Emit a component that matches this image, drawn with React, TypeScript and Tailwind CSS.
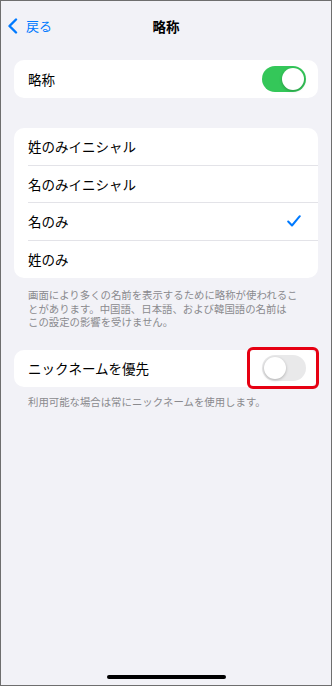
import React from 'react';

const options = ['姓のみイニシャル', '名のみイニシャル', '名のみ', '姓のみ'];
const selected = '名のみ';

function Toggle({ on }: { on: boolean }) {
  return (
    <div
      className={
        on
          ? 'flex h-[26px] w-[44px] items-center justify-end rounded-full bg-[#34c759] p-[2px]'
          : 'flex h-[26px] w-[44px] items-center justify-start rounded-full bg-[#e9e9ea] p-[2px]'
      }
    >
      <div className="h-[22px] w-[22px] rounded-full bg-white shadow-[0_1px_3px_rgba(0,0,0,0.25)]" />
    </div>
  );
}

export default function App() {
  return (
    <div className="relative flex h-[686px] w-[332px] flex-col overflow-hidden border border-[#6e6e6e] bg-[#f2f2f7] font-['Noto_Sans_CJK_JP',sans-serif] text-black">
      {/* nav bar */}
      <div className="relative flex h-[50px] items-center">
        <div className="flex items-center gap-[8px] pl-[6px] text-[13px] text-[#007aff]">
          <svg width="11" height="16" viewBox="0 0 11 16" fill="none">
            <path
              d="M9 1.5 L2.5 8 L9 14.5"
              stroke="#007aff"
              strokeWidth="2.4"
              strokeLinecap="round"
              strokeLinejoin="round"
            />
          </svg>
          <span>戻る</span>
        </div>
        <div className="absolute left-0 right-0 text-center text-[13.5px] font-semibold">略称</div>
      </div>

      <div className="px-[13px]">
        <div className="mt-[9px] flex h-[38px] items-center justify-between rounded-[10px] bg-white pl-[14px] pr-[12px]">
          <span className="text-[13.5px]">略称</span>
          <Toggle on />
        </div>

        <div className="mt-[30px] overflow-hidden rounded-[10px] bg-white">
          {options.map((o, i) => (
            <div key={o} className="pl-[14px]">
              <div
                className={
                  i < options.length - 1
                    ? 'flex h-[37.5px] items-center justify-between border-b border-[#e3e3e8] pr-[17px]'
                    : 'flex h-[37.5px] items-center justify-between pr-[17px]'
                }
              >
                <span className="text-[13.5px]">{o}</span>
                {o === selected && (
                  <svg width="14" height="12" viewBox="0 0 14 12" fill="none">
                    <path
                      d="M1.2 6.5 L5 10.5 L12.8 1.2"
                      stroke="#007aff"
                      strokeWidth="2"
                      strokeLinecap="round"
                      strokeLinejoin="round"
                    />
                  </svg>
                )}
              </div>
            </div>
          ))}
        </div>

        <p className="mt-[10px] px-[14px] text-[10.4px] leading-[13.5px] text-[#8a8a8e]">
          画面により多くの名前を表示するために略称が使われることがあります。中国語、日本語、および韓国語の名前は
          <br />
          この設定の影響を受けません。
        </p>

        <div className="relative mt-[21px] flex h-[37px] items-center justify-between rounded-[10px] bg-white pl-[14px] pr-[12px]">
          <span className="text-[13.5px]">ニックネームを優先</span>
          <Toggle on={false} />
          <div className="absolute left-[233px] top-[-3px] h-[42px] w-[72px] rounded-[6px] border-[3px] border-[#e60012]" />
        </div>

        <p className="mt-[8px] px-[14px] text-[10.4px] leading-[13.5px] text-[#8a8a8e]">
          利用可能な場合は常にニックネームを使用します。
        </p>
      </div>

      <div className="mt-auto flex justify-center pb-[6px]">
        <div className="h-[4px] w-[119px] rounded-full bg-black" />
      </div>
    </div>
  );
}
